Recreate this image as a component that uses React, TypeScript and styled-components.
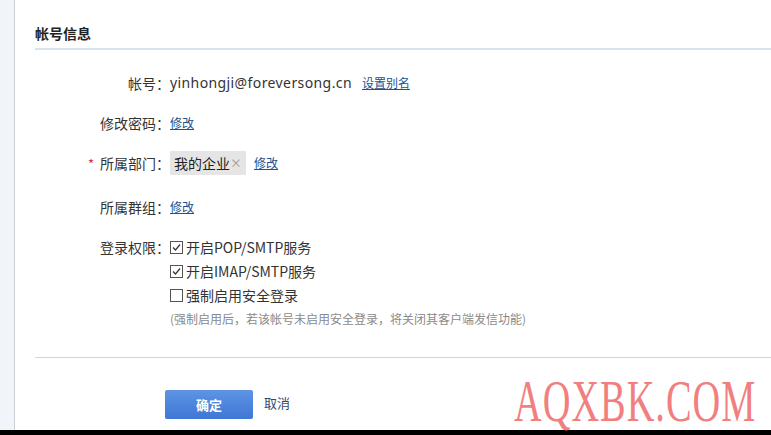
import styled, { createGlobalStyle } from "styled-components"

const GlobalStyle = createGlobalStyle`
  html, body {
    margin: 0;
    padding: 0;
    background: #fff;
  }
  body {
    font-family: "Noto Sans", "Noto Sans CJK SC", sans-serif;
    color: #333;
  }
`

const Page = styled.div`
  position: relative;
  display: flex;
  flex-direction: column;
  width: 771px;
  height: 435px;
  overflow: hidden;
`

const Body = styled.div`
  flex: 1;
  display: flex;
`

const SideStrip = styled.div`
  width: 14px;
  background: #f1f5f9;
  border-right: 1px solid #c9cfd6;
`

const Main = styled.div`
  flex: 1;
  padding-left: 20px;
  display: flex;
  flex-direction: column;
`

const Title = styled.h2`
  margin: 0;
  padding-top: 23px;
  padding-bottom: 5px;
  font-size: 14px;
  line-height: 20px;
  font-weight: bold;
  color: #222;
  font-family: "Noto Sans CJK SC", sans-serif;
  border-bottom: 2px solid #d9e3eb;
`

const Form = styled.div`
  padding-top: 13px;
  display: flex;
  flex-direction: column;
`

const Row = styled.div<{ $extra?: number }>`
  display: flex;
  align-items: flex-start;
  padding: 8px 0;
  margin-bottom: ${p => p.$extra || 0}px;
`

const Label = styled.div`
  position: relative;
  width: 135px;
  flex-shrink: 0;
  text-align: right;
  font-size: 14px;
  line-height: 24px;
  color: #333;
  font-family: "Noto Sans CJK SC", sans-serif;
`

const Required = styled.span`
  color: #d33;
  margin-right: 6px;
  font-size: 13px;
`

const Value = styled.div<{ $gap?: number }>`
  display: flex;
  align-items: center;
  gap: ${p => p.$gap ?? 10}px;
  font-size: 14px;
  line-height: 24px;
  color: #333;
`

const Email = styled.span`
  font-family: "Noto Sans", sans-serif;
  font-size: 14px;
  letter-spacing: 0.4px;
`

const Link = styled.a`
  font-size: 12px;
  color: #23508c;
  text-decoration: underline;
  font-family: "Noto Sans CJK SC", sans-serif;
  cursor: pointer;
`

const Tag = styled.span`
  display: inline-flex;
  align-items: center;
  height: 24px;
  padding: 0 4px 0 4px;
  background: #e5e5e5;
  font-size: 14px;
  font-family: "Noto Sans CJK SC", sans-serif;
  color: #222;
`

const TagClose = styled.span`
  color: #999;
  font-size: 12px;
`

const PermList = styled.div`
  display: flex;
  flex-direction: column;
`

const Check = styled.label`
  display: flex;
  align-items: center;
  gap: 3px;
  height: 24px;
  font-size: 14px;
  color: #333;
  font-family: "Noto Sans CJK SC", sans-serif;
`

const Box = styled.span`
  width: 11px;
  height: 11px;
  border: 1px solid #555;
  display: inline-flex;
  align-items: center;
  justify-content: center;
  background: #fff;
`

const Hint = styled.div`
  height: 24px;
  line-height: 24px;
  font-size: 12px;
  color: #8a8a8a;
  font-family: "Noto Sans CJK SC", sans-serif;
`

const Divider = styled.div`
  margin-top: 18px;
  border-top: 1px solid #d4d4d4;
`

const Actions = styled.div`
  display: flex;
  align-items: center;
  gap: 11px;
  padding-left: 130px;
  padding-top: 32px;
`

const PrimaryButton = styled.button`
  width: 88px;
  height: 29px;
  border: none;
  border-radius: 2px;
  background: linear-gradient(#5f94e3, #3e77d5);
  color: #fff;
  font-weight: bold;
  font-size: 13px;
  font-family: "Noto Sans CJK SC", sans-serif;
  cursor: pointer;
`

const Cancel = styled.a`
  font-size: 13px;
  line-height: 20px;
  margin-top: -4px;
  color: #33496d;
  font-family: "Noto Sans CJK SC", sans-serif;
  cursor: pointer;
`

const BottomBar = styled.div`
  height: 5px;
  background: #000;
`

const Watermark = styled.div`
  position: absolute;
  left: 514px;
  top: 377px;
  font-family: "Liberation Serif", serif;
  font-size: 60px;
  line-height: 48px;
  color: #f27f7f;
  letter-spacing: 1.5px;
  transform: scaleX(0.64);
  transform-origin: left top;
  white-space: nowrap;
  pointer-events: none;
`

const CheckMark = () => (
  <svg width="9" height="9" viewBox="0 0 9 9">
    <path d="M1 4.5 L3.5 7 L8 1.5" fill="none" stroke="#333" strokeWidth="1.2" />
  </svg>
)

const perms = [
  { text: "开启POP/SMTP服务", checked: true },
  { text: "开启IMAP/SMTP服务", checked: true },
  { text: "强制启用安全登录", checked: false },
]

const App = () => {
  return (
    <Page>
      <GlobalStyle />
      <Body>
        <SideStrip />
        <Main>
          <Title>帐号信息</Title>
          <Form>
            <Row>
              <Label>帐号：</Label>
              <Value>
                <Email>yinhongji@foreversong.cn</Email>
                <Link>设置别名</Link>
              </Value>
            </Row>
            <Row>
              <Label>修改密码：</Label>
              <Value>
                <Link>修改</Link>
              </Value>
            </Row>
            <Row $extra={3}>
              <Label>
                <Required>*</Required>所属部门：
              </Label>
              <Value $gap={8}>
                <Tag>
                  我的企业<TagClose>×</TagClose>
                </Tag>
                <Link>修改</Link>
              </Value>
            </Row>
            <Row>
              <Label>所属群组：</Label>
              <Value>
                <Link>修改</Link>
              </Value>
            </Row>
            <Row>
              <Label>登录权限：</Label>
              <PermList>
                {perms.map(p => (
                  <Check key={p.text}>
                    <Box>{p.checked && <CheckMark />}</Box>
                    {p.text}
                  </Check>
                ))}
                <Hint>(强制启用后，若该帐号未启用安全登录，将关闭其客户端发信功能)</Hint>
              </PermList>
            </Row>
          </Form>
          <Divider />
          <Actions>
            <PrimaryButton>确定</PrimaryButton>
            <Cancel>取消</Cancel>
          </Actions>
        </Main>
      </Body>
      <BottomBar />
      <Watermark>AQXBK.COM</Watermark>
    </Page>
  )
}

export default App
